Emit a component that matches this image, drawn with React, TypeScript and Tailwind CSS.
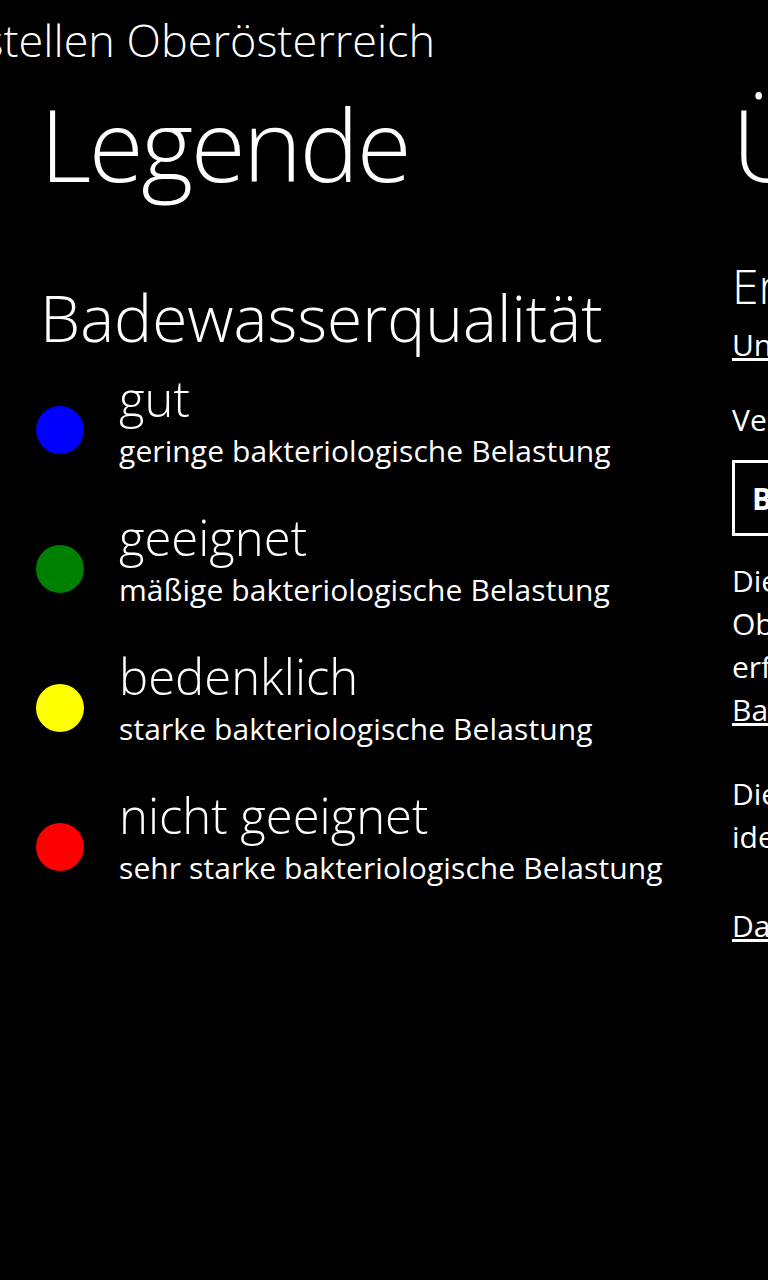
import React from "react";

const font = { fontFamily: '"Open Sans", "Noto Sans", sans-serif' };

const items = [
  { color: "bg-[#0000ff]", title: "gut", desc: "geringe bakteriologische Belastung" },
  { color: "bg-[#008000]", title: "geeignet", desc: "mäßige bakteriologische Belastung" },
  { color: "bg-[#ffff00]", title: "bedenklich", desc: "starke bakteriologische Belastung" },
  { color: "bg-[#ff0000]", title: "nicht geeignet", desc: "sehr starke bakteriologische Belastung" },
];

export default function App() {
  return (
    <div className="w-[768px] h-[1280px] bg-black text-white overflow-hidden" style={font}>
      <div className="whitespace-nowrap h-[80px] overflow-hidden">
        <div className="ml-[-121px] text-[45px] font-light leading-[80px]">Badestellen Oberösterreich</div>
      </div>
      <div className="flex w-[1500px]">
        <div className="w-[730px] pl-[36px] shrink-0">
          <h1 className="text-[100px] font-light leading-none pl-[4px] mt-[13px] tracking-[-2.5px]">Legende</h1>
          <h2 className="text-[64px] font-light leading-none pl-[4px] mt-[93px]">Badewasserqualität</h2>
          <div className="mt-[20px] flex flex-col gap-[38px]">
            {items.map((it) => (
              <div key={it.title} className="flex items-start">
                <div className={`w-[48px] h-[48px] mt-[36px] rounded-full ${it.color} shrink-0`} />
                <div className="ml-[35px]">
                  <div className="text-[49px] font-light leading-[56px]">{it.title}</div>
                  <div className="text-[30px] leading-[40px] mt-[5px] tracking-[0.1px]">{it.desc}</div>
                </div>
              </div>
            ))}
          </div>
        </div>
        <div className="w-[700px] shrink-0 pl-[2px]">
          <h1 className="text-[100px] font-light leading-none mt-[13px] tracking-[-2.5px]">Über</h1>
          <div className="text-[48px] font-light leading-[56px] mt-[65px]">Entwickler</div>
          <div className="text-[30px] underline leading-[40px] mt-[11px]">Unterwegs GmbH</div>
          <div className="text-[30px] leading-[40px] mt-[35px]">Version 1.0</div>
          <div className="mt-[20px] border-[3px] border-white w-[300px] h-[76px] flex items-center px-[17px] text-[30px] font-bold">Bewerten</div>
          <div className="text-[30px] leading-[43px] mt-[23px]">
            Die Daten werden vom Land<br />Oberösterreich zur Verfügung gestellt und<br />erfolgen ohne Gewähr.<br />
            <span className="underline">Badegewässer Oberösterreich</span>
          </div>
          <div className="text-[30px] leading-[43px] mt-[41px]">
            Diese App ist keine offizielle App und<br />identifiziert sich nicht mit dem Land.
          </div>
          <div className="text-[30px] leading-[43px] mt-[46px] underline">Datenschutz</div>
        </div>
      </div>
    </div>
  );
}
